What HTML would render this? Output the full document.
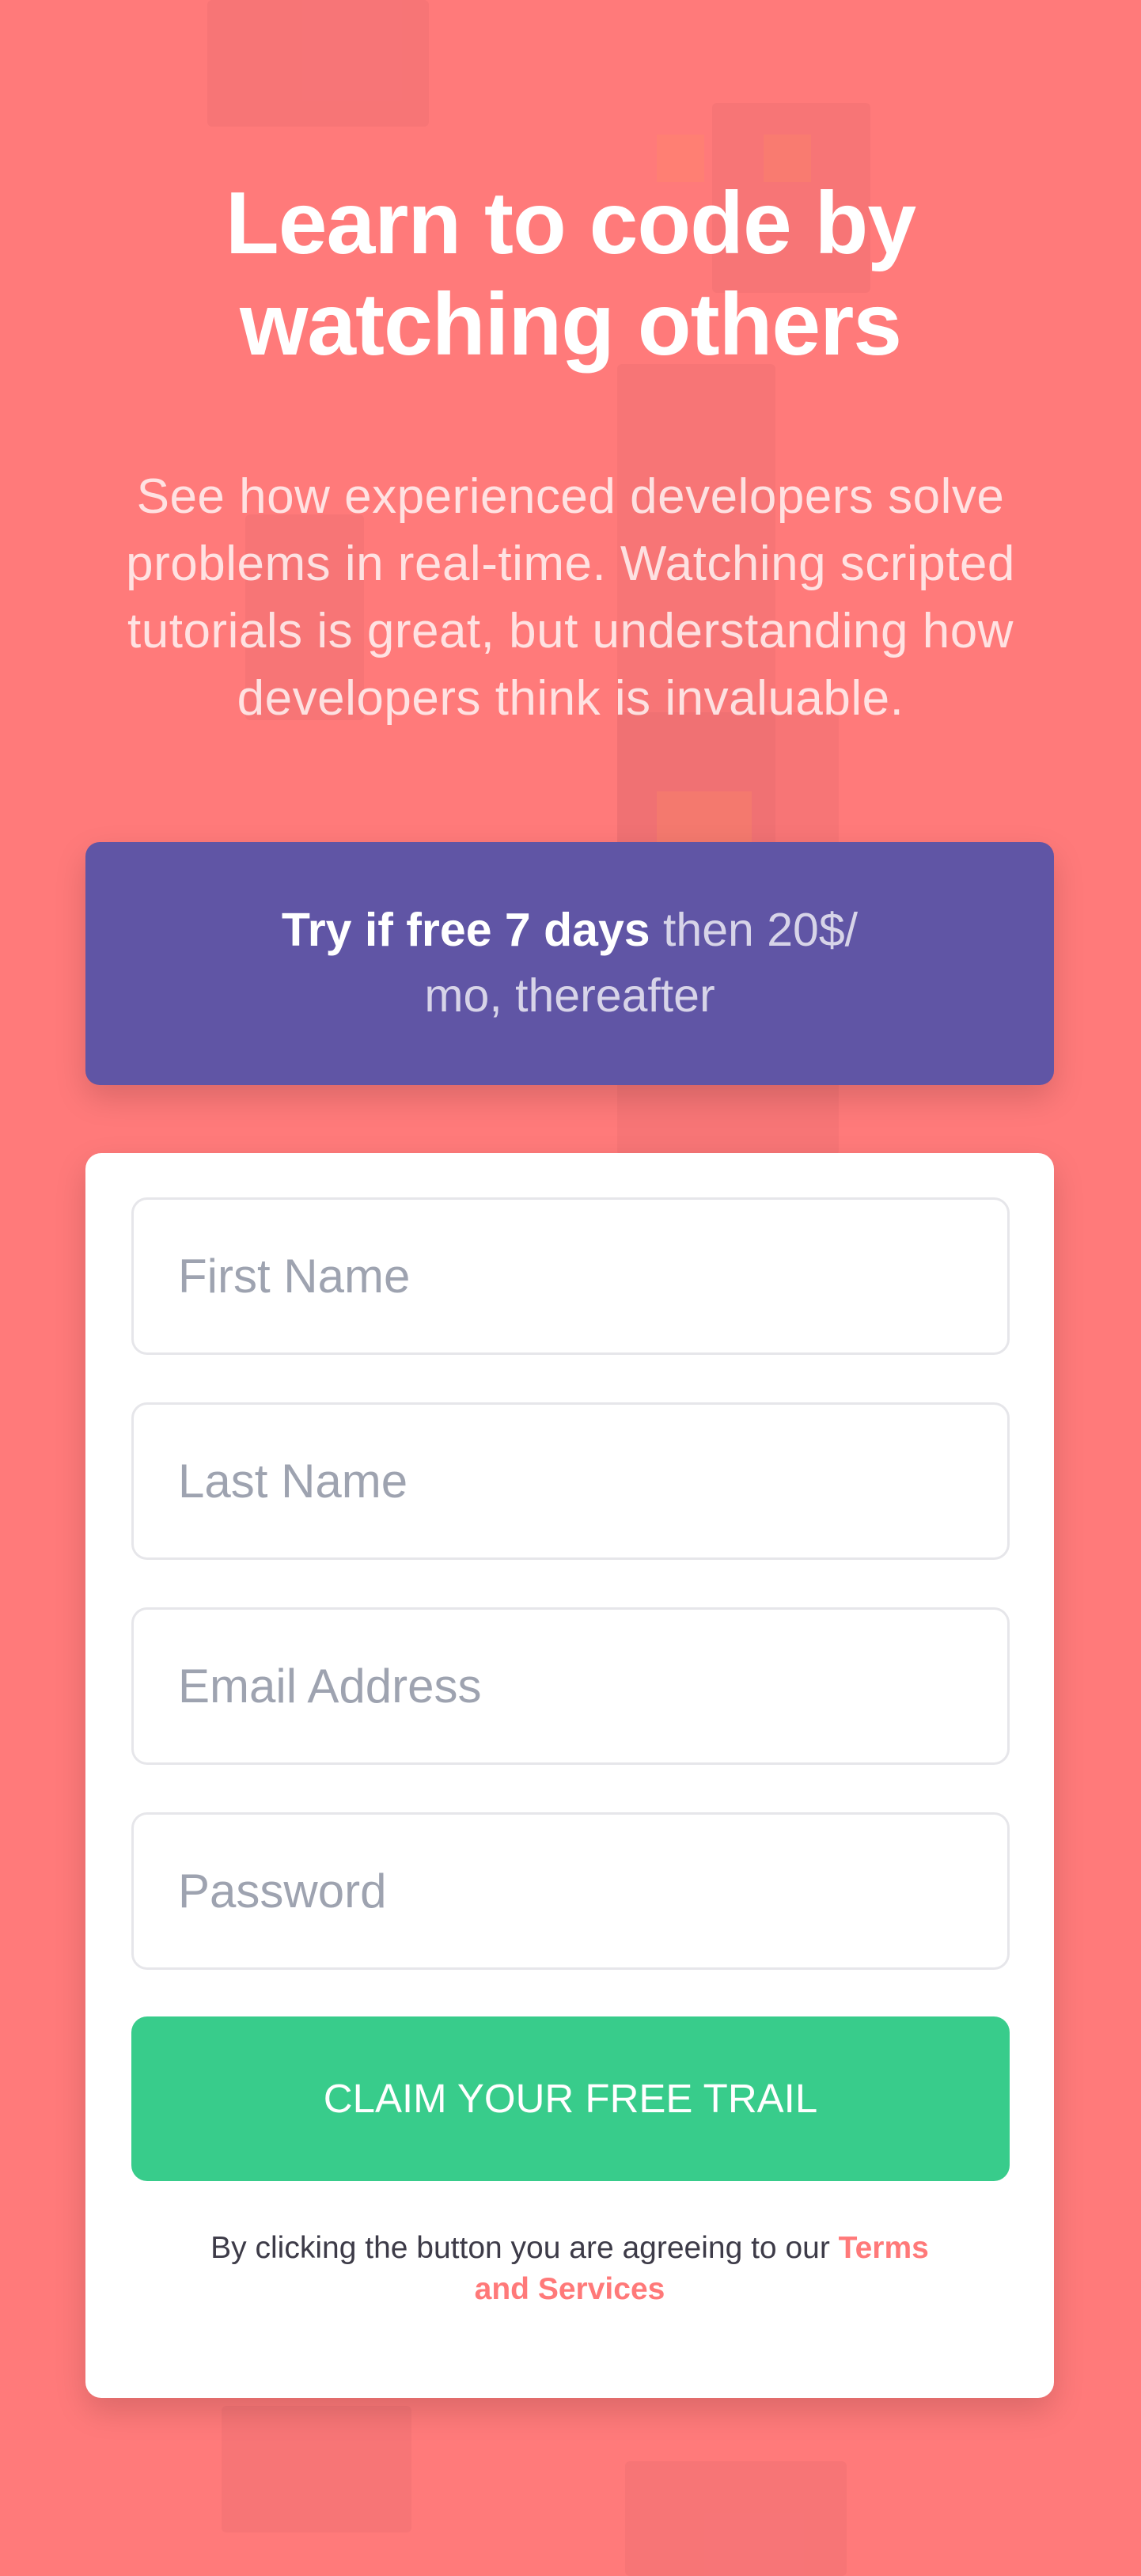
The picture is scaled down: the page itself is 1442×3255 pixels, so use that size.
<!DOCTYPE html>
<html><head><meta charset="utf-8"><style>
*{box-sizing:border-box;margin:0;padding:0}
html,body{width:1442px;height:3255px;overflow:hidden}
body{background:#ff7a7a;font-family:"Liberation Sans",sans-serif;position:relative}
.deco{position:absolute;background:rgba(200,90,100,0.14);border-radius:6px}
.deco2{position:absolute;background:rgba(255,140,100,0.3)}
h1{position:absolute;top:218px;left:0;width:1442px;text-align:center;color:#fff;font-size:111px;line-height:128px;font-weight:bold;letter-spacing:-1px}
p.lead{position:absolute;top:585px;left:0;width:1442px;text-align:center;color:rgba(255,255,255,0.78);font-size:62px;line-height:85px;white-space:nowrap;letter-spacing:0.5px}
.promo{position:absolute;left:108px;top:1064px;width:1224px;height:307px;background:#6055a5;border-radius:18px;box-shadow:0 16px 40px rgba(0,0,0,0.15);color:#fff;text-align:center;font-size:59px;line-height:83px;padding-top:70px;white-space:nowrap}
.promo span{color:rgba(255,255,255,0.75)}
.card{position:absolute;left:108px;top:1457px;width:1224px;height:1573px;background:#fff;border-radius:20px;box-shadow:0 16px 40px rgba(0,0,0,0.15)}
.inp{position:absolute;left:58px;width:1110px;height:199px;border:3px solid #e6e6ea;border-radius:20px;color:#9ea3b0;font-size:60px;padding-left:56px;line-height:193px}
.btn{position:absolute;left:58px;top:1091px;width:1110px;height:208px;background:#38cc8b;border-radius:20px;color:#fff;font-size:51px;text-align:center;line-height:208px}
.note{position:absolute;left:0;top:1358px;width:1224px;text-align:center;color:#3d3b48;font-size:39px;line-height:52px;white-space:nowrap}
.note b{color:#ff7979}
</style></head><body>
<div class="deco" style="left:262px;top:0;width:280px;height:160px"></div>
<div class="deco" style="left:900px;top:130px;width:200px;height:240px"></div>
<div class="deco2" style="left:830px;top:170px;width:60px;height:60px"></div>
<div class="deco2" style="left:965px;top:170px;width:60px;height:60px"></div>
<div class="deco" style="left:780px;top:460px;width:200px;height:700px"></div>
<div class="deco" style="left:780px;top:900px;width:280px;height:560px"></div>
<div class="deco2" style="left:830px;top:1000px;width:120px;height:80px"></div>
<div class="deco" style="left:310px;top:650px;width:150px;height:260px"></div>
<div class="deco" style="left:790px;top:3110px;width:280px;height:145px"></div>
<div class="deco" style="left:280px;top:3040px;width:240px;height:160px"></div>
<h1>Learn to code by<br>watching others</h1>
<p class="lead">See how experienced developers solve<br>problems in real-time. Watching scripted<br>tutorials is great, but understanding how<br>developers think is invaluable.</p>
<div class="promo"><b style="font-weight:bold">Try if free 7 days</b> <span>then 20$/<br>mo, thereafter</span></div>
<div class="card">
<div class="inp" style="top:56px">First Name</div>
<div class="inp" style="top:315px">Last Name</div>
<div class="inp" style="top:574px">Email Address</div>
<div class="inp" style="top:833px">Password</div>
<div class="btn">CLAIM YOUR FREE TRAIL</div>
<div class="note">By clicking the button you are agreeing to our <b>Terms<br>and Services</b></div>
</div>
</body></html>
